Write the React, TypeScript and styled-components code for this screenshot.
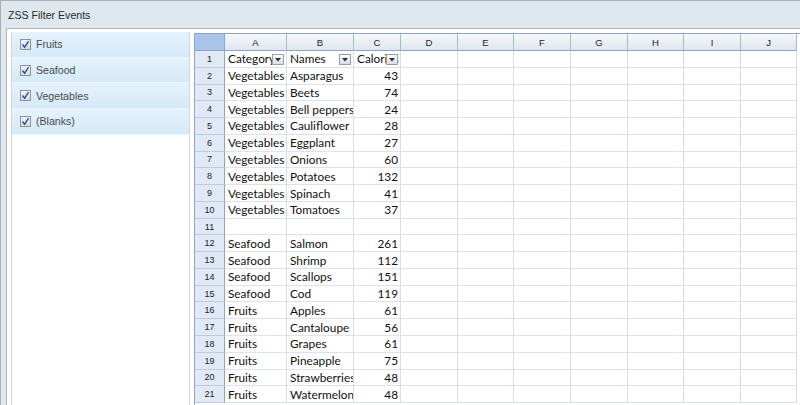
import { FC, Fragment } from "react";
import styled, { createGlobalStyle, css } from "styled-components";

const GlobalStyle = createGlobalStyle`
  html, body {
    margin: 0;
    padding: 0;
    overflow: hidden;
    background: #fff;
  }
  * {
    box-sizing: border-box;
  }
`;

type Row = [string, string, string];

const rows: Row[] = [
  ["Category", "Names", "Calories"],
  ["Vegetables", "Asparagus", "43"],
  ["Vegetables", "Beets", "74"],
  ["Vegetables", "Bell peppers", "24"],
  ["Vegetables", "Cauliflower", "28"],
  ["Vegetables", "Eggplant", "27"],
  ["Vegetables", "Onions", "60"],
  ["Vegetables", "Potatoes", "132"],
  ["Vegetables", "Spinach", "41"],
  ["Vegetables", "Tomatoes", "37"],
  ["", "", ""],
  ["Seafood", "Salmon", "261"],
  ["Seafood", "Shrimp", "112"],
  ["Seafood", "Scallops", "151"],
  ["Seafood", "Cod", "119"],
  ["Fruits", "Apples", "61"],
  ["Fruits", "Cantaloupe", "56"],
  ["Fruits", "Grapes", "61"],
  ["Fruits", "Pineapple", "75"],
  ["Fruits", "Strawberries", "48"],
  ["Fruits", "Watermelon", "48"],
];

const filters = ["Fruits", "Seafood", "Vegetables", "(Blanks)"];
const columns = ["A", "B", "C", "D", "E", "F", "G", "H", "I", "J"];

const Window = styled.div`
  width: 800px;
  height: 405px;
  display: flex;
  flex-direction: column;
  background: #dfe7ef;
  border-top: 1px solid #a7afba;
  border-left: 1px solid #a7afba;
  overflow: hidden;
`;

const TitleBar = styled.div`
  height: 27px;
  flex: none;
  display: flex;
  align-items: center;
  padding-left: 7px;
  font-family: "Liberation Sans", Arial, sans-serif;
  font-size: 10.6px;
  color: #2a2a2a;
`;

const Body = styled.div`
  flex: 1;
  min-height: 0;
  display: flex;
  padding-left: 5px;
`;

const Inner = styled.div`
  flex: 1;
  min-width: 0;
  display: flex;
  gap: 4px;
  padding: 3px 0 0 4px;
  background: #fff;
  border-top: 1px solid #aab3be;
  border-left: 1px solid #aab3be;
`;

const ListBox = styled.div`
  width: 179px;
  flex: none;
  border-left: 1px solid #d3d6da;
  border-right: 1px solid #d3d6da;
`;

const ListItem = styled.div`
  height: 25.7px;
  display: flex;
  align-items: center;
  gap: 5px;
  padding-left: 8px;
  background: linear-gradient(#e6f3fc, #d4e9f8);
  border-bottom: 1px solid #eef7fd;
  font-family: "Liberation Sans", Arial, sans-serif;
  font-size: 10.6px;
  color: #4a4a4a;
`;

const CheckBox = styled.span`
  width: 11px;
  height: 11px;
  display: flex;
  align-items: center;
  justify-content: center;
  border: 1px solid #8d9199;
  background: linear-gradient(#f2f3f5, #d9dce1);
`;

const Sheet = styled.div`
  flex: 1;
  min-width: 0;
  overflow: hidden;
  margin-top: 1px;
  border-top: 1px solid #8ea6c4;
  border-left: 1px solid #8ea6c4;
`;

const Grid = styled.div`
  display: grid;
  grid-template-columns: 30px 62px 67px 47px 57px 56px 57px 57px 56px 57px 56px;
  grid-auto-rows: 16.77px;
  grid-template-rows: 17px;
  width: max-content;
`;

const Corner = styled.div`
  background: #a9c4e8;
  border-right: 1px solid #8ea6c4;
  border-bottom: 1px solid #8ea6c4;
`;

const ColHead = styled.div`
  display: flex;
  align-items: center;
  justify-content: center;
  background: linear-gradient(#f6f8fb, #dfe6f0);
  border-right: 1px solid #a9bacd;
  border-bottom: 1px solid #8ea6c4;
  font-family: "Liberation Sans", Arial, sans-serif;
  font-size: 9.5px;
  color: #1e1e1e;
`;

const RowHead = styled.div`
  display: flex;
  align-items: center;
  justify-content: center;
  background: #e0e9f5;
  border-right: 1px solid #8ea6c4;
  border-bottom: 1px solid #bccbdf;
  font-family: "Liberation Sans", Arial, sans-serif;
  font-size: 9px;
  color: #222;
`;

type CellProps = {
  $num?: boolean;
};

const Cell = styled.div<CellProps>`
  position: relative;
  display: flex;
  align-items: center;
  padding: 0 3px;
  overflow: hidden;
  white-space: nowrap;
  border-right: 1px solid #d7dded;
  border-bottom: 1px solid #dce2ef;
  font-family: Lato, "Liberation Sans", sans-serif;
  font-size: 11.8px;
  color: #111;

  ${({ $num }) =>
    $num &&
    css`
      justify-content: flex-end;
      padding-right: 2px;
    `}
`;

const FilterButton = styled.span`
  position: absolute;
  right: 2px;
  top: 3px;
  width: 12px;
  height: 11px;
  display: flex;
  align-items: center;
  justify-content: center;
  border: 1px solid #9aa0a8;
  background: linear-gradient(#fdfdfd, #d9dce0);
`;

const Check = () => (
  <svg width="9" height="9" viewBox="0 0 9 9">
    <path d="M1.5 4.5 L3.6 7.2 L7.6 1.2" fill="none" stroke="#2a4ea6" strokeWidth="1.4" />
  </svg>
);

const Arrow = () => (
  <svg width="6" height="4" viewBox="0 0 6 4">
    <path d="M0 0 H6 L3 3.5 Z" fill="#26324a" />
  </svg>
);

const App: FC = () => {
  return (
    <>
      <GlobalStyle />
      <Window>
        <TitleBar>ZSS Filter Events</TitleBar>
        <Body>
          <Inner>
            <ListBox>
              {filters.map((f) => (
                <ListItem key={f}>
                  <CheckBox>
                    <Check />
                  </CheckBox>
                  {f}
                </ListItem>
              ))}
            </ListBox>
            <Sheet>
              <Grid>
                <Corner />
                {columns.map((c) => (
                  <ColHead key={c}>{c}</ColHead>
                ))}
                {rows.map((r, i) => (
                  <Fragment key={i}>
                    <RowHead>{i + 1}</RowHead>
                    {columns.map((c, j) => {
                      const value = j < 3 ? r[j] : "";
                      const num = j === 2 && i > 0;
                      return (
                        <Cell key={c} $num={num}>
                          {value}
                          {i === 0 && j < 3 && (
                            <FilterButton>
                              <Arrow />
                            </FilterButton>
                          )}
                        </Cell>
                      );
                    })}
                  </Fragment>
                ))}
              </Grid>
            </Sheet>
          </Inner>
        </Body>
      </Window>
    </>
  );
};

export default App;
